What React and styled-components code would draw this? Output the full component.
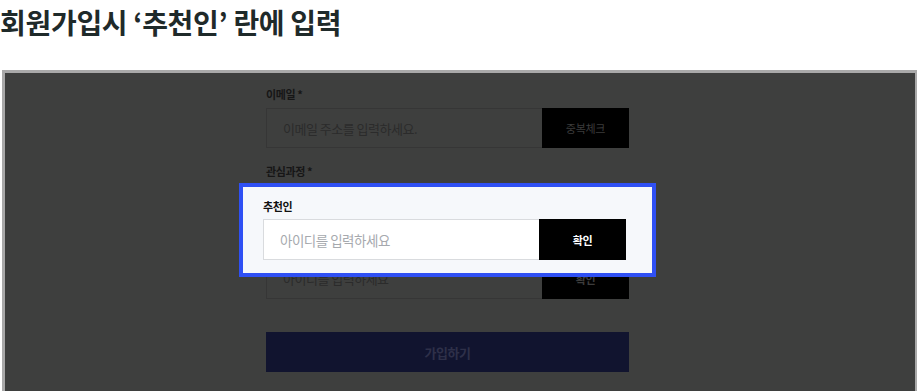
import styled, { createGlobalStyle } from "styled-components"

const Global = createGlobalStyle`
    body {
        margin: 0;
        background: #ffffff;
        font-family: "Noto Sans CJK KR", "Noto Sans", sans-serif;
        overflow: hidden;
    }
`

const Page = styled.div`
    width: 917px;
    height: 391px;
    overflow: hidden;
`

const Titulo = styled.h1`
    margin: 0;
    height: 70px;
    padding-top: 2px;
    box-sizing: border-box;
    font-size: 28px;
    line-height: 40px;
    font-weight: 700;
    letter-spacing: -0.3px;
    color: #1f2a2a;
`

const Moldura = styled.div`
    position: relative;
    margin-left: 2px;
    width: 915px;
    height: 340px;
    box-sizing: border-box;
    background-color: #3e3f3e;
    border-top: 3px solid #a9a9a9;
    border-left: 3px solid #a9a9a9;
    border-right: 2px solid #a9a9a9;
`

const Coluna = styled.div`
    width: 363px;
    margin-left: 261px;
    padding-top: 13px;
    display: flex;
    flex-direction: column;
`

const Rotulo = styled.div`
    font-size: 11px;
    line-height: 16px;
    font-weight: 700;
    letter-spacing: -0.4px;
    color: ${(p) => (p.$claro ? "#111111" : "#161616")};
    margin-top: ${(p) => p.$topo || "0px"};
    margin-bottom: ${(p) => p.$baixo || "6px"};
`

const Linha = styled.div`
    display: flex;
    height: ${(p) => p.$altura || "40px"};
`

const Campo = styled.div`
    flex: 1;
    display: flex;
    align-items: center;
    padding-left: 16px;
    box-sizing: border-box;
    font-size: ${(p) => (p.$claro ? "13.5px" : "13px")};
    letter-spacing: -0.5px;
    background: ${(p) => (p.$claro ? "#ffffff" : "transparent")};
    color: ${(p) => (p.$claro ? "#a6a9ae" : "#2b2b2b")};
    border: 1px solid ${(p) => (p.$claro ? "#d9dbde" : "#363636")};
    border-right: none;
`

const Botao = styled.div`
    width: 87px;
    display: flex;
    align-items: center;
    justify-content: center;
    background-color: #000000;
    font-size: 11px;
    font-weight: ${(p) => (p.$negrito ? 700 : 400)};
    letter-spacing: -0.3px;
    color: ${(p) => (p.$claro ? "#ffffff" : "#3c3c3c")};
`

const Selecao = styled.div`
    height: 40px;
    border: 1px solid #363636;
    box-sizing: border-box;
`

const BotaoGrande = styled.div`
    margin-top: 33px;
    height: 40px;
    display: flex;
    align-items: center;
    justify-content: center;
    background-color: #11142f;
    color: #2e3049;
    font-size: 13px;
    font-weight: 700;
    letter-spacing: -0.5px;
`

const Destaque = styled.div`
    position: absolute;
    left: 234px;
    top: 110px;
    width: 417px;
    height: 94px;
    box-sizing: border-box;
    border: 4px solid #2f50f4;
    background-color: #f6f8fb;
    padding: 11px 26px 0 20px;
    display: flex;
    flex-direction: column;
`

function App() {
    return (
        <Page>
            <Global />
            <Titulo>회원가입시 ‘추천인’ 란에 입력</Titulo>
            <Moldura>
                <Coluna>
                    <Rotulo>이메일 *</Rotulo>
                    <Linha>
                        <Campo>이메일 주소를 입력하세요.</Campo>
                        <Botao>중복체크</Botao>
                    </Linha>
                    <Rotulo $topo="15px">관심과정 *</Rotulo>
                    <Selecao />
                    <Rotulo $topo="11px">추천인</Rotulo>
                    <Linha $altura="41px">
                        <Campo>아이디를 입력하세요</Campo>
                        <Botao $negrito>확인</Botao>
                    </Linha>
                    <BotaoGrande>가입하기</BotaoGrande>
                </Coluna>
                <Destaque>
                    <Rotulo $claro $baixo="5px">추천인</Rotulo>
                    <Linha $altura="41px">
                        <Campo $claro>아이디를 입력하세요</Campo>
                        <Botao $claro $negrito>확인</Botao>
                    </Linha>
                </Destaque>
            </Moldura>
        </Page>
    )
}

export default App
